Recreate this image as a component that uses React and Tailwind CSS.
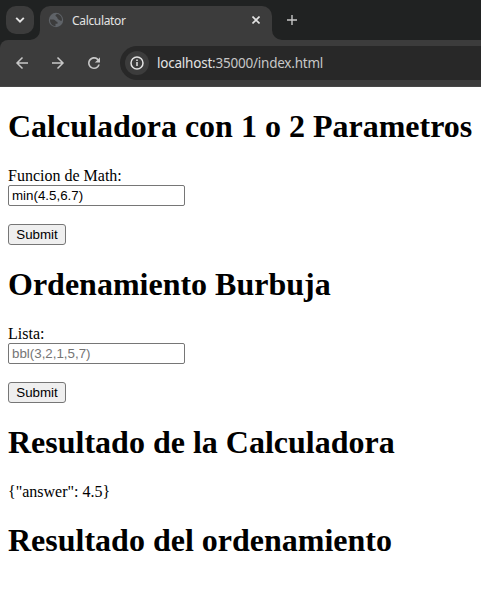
import React from 'react';

function Heading({ children }) {
  return <h1 className="mb-[23px] h-9 whitespace-nowrap text-[32px] leading-9 font-bold">{children}</h1>;
}

function Form({ label, value, placeholder }) {
  return (
    <div className="mb-[21px] flex flex-col items-start">
      <label className="h-[18px] leading-[18px]">{label}</label>
      <input
        className="h-[21px] w-[177px] rounded-[2px] border border-[#767676] bg-white px-[3px] text-[13.333px] font-['Liberation_Sans',Arial,sans-serif] placeholder:text-[#757575]"
        defaultValue={value}
        placeholder={placeholder}
      />
      <button className="mt-[18px] h-[21px] w-[58px] rounded-[3px] border border-[#767676] bg-[#efefef] text-[13.333px] leading-[18px] font-['Liberation_Sans',Arial,sans-serif]">
        Submit
      </button>
    </div>
  );
}

export default function App() {
  return (
    <div className="h-[593px] w-[481px] overflow-hidden bg-white font-['Liberation_Serif','Times_New_Roman',serif] text-base text-black">
      <header className="h-[87px] bg-[#202222] font-['Noto_Sans',sans-serif] text-[#e3e3e3]">
        <div className="flex h-10 items-start pt-[6px]">
          <button className="ml-[6px] flex h-7 w-7 items-center justify-center rounded-[10px] bg-[#3c3c3c]">
            <svg width="10" height="6" viewBox="0 0 10 6" fill="none" stroke="currentColor" strokeWidth="1.9"><path d="m1.2.8 3.8 3.8L8.8.8" /></svg>
          </button>
          <div className="relative ml-[6px] flex h-[34px] w-[232px] items-start rounded-t-[10px] bg-[#3c3c3c] pl-2">
            <svg className="absolute bottom-0 -left-[10px]" width="10" height="10" viewBox="0 0 10 10"><path d="M10 0v10H0A10 10 0 0 0 10 0" fill="#3c3c3c" /></svg>
            <svg className="absolute bottom-0 -right-[10px]" width="10" height="10" viewBox="0 0 10 10"><path d="M0 0v10h10A10 10 0 0 1 0 0" fill="#3c3c3c" /></svg>
            <svg className="mt-[6px]" width="16" height="16" viewBox="0 0 16 16"><circle cx="8" cy="8" r="7.2" fill="#5f6368" /><path d="M2 7.500h3.500c2 0 2 2.500 4 2.500v1.800H7.500v2.400C4 14 1.800 11 2 7.500M9.200 2c-2 .4-2.200 2-1 2.600 1.600.7.8 2.400 2.300 2.900 1.300.5 1.500 1.500 3.400 1.300C14.500 5.500 12.200 2.400 9.200 2" fill="#3c3c3c" /></svg>
            <span className="ml-2 mt-[7px] text-xs leading-4 tracking-[-0.33px]">Calculator</span>
            <svg className="ml-auto mr-3 mt-[10px]" width="8" height="8" viewBox="0 0 8 8" stroke="currentColor" strokeWidth="1.6"><path d="m.5.5 7 7M7.500.5l-7 7" /></svg>
          </div>
          <svg className="ml-[15px] mt-[9px]" width="10" height="10" viewBox="0 0 10 10" stroke="#c7c7c7" strokeWidth="1.4"><path d="M5 0v10M0 5h10" /></svg>
        </div>
        <div className="flex h-[47px] items-center rounded-tl-[8px] border-b border-[#474747] bg-[#3c3c3c] pl-[14px]">
          <svg width="16" height="16" viewBox="0 0 16 16" fill="none" stroke="#c7c7c7" strokeWidth="1.5"><path d="M14 8H3m5.500-5.500L3 8l5.500 5.500" /></svg>
          <svg className="ml-5" width="16" height="16" viewBox="0 0 16 16" fill="none" stroke="#c7c7c7" strokeWidth="1.5"><path d="M2 8h11M7.500 2.500 13 8l-5.500 5.500" /></svg>
          <svg className="ml-5" width="16" height="16" viewBox="0 0 16 16"><path d="M8 14a6 6 0 1 1 4.500-10L14 2.300V7.500H8.800l2.500-2.300A4.400 4.400 0 1 0 12.200 9.500h1.600A6 6 0 0 1 8 14" fill="#c7c7c7" /></svg>
          <div className="ml-[18px] flex h-[34px] flex-1 items-center rounded-l-full bg-[#282828] pl-[5px]">
            <span className="flex h-6 w-6 items-center justify-center rounded-full bg-[#3c3c3c]"><svg width="14" height="14" viewBox="0 0 14 14" fill="none" stroke="currentColor" strokeWidth="1.5"><circle cx="7" cy="7" r="6" /><path d="M7 6v4M7 3.500V5" /></svg></span>
            <span className="ml-2 text-[13.5px] tracking-[-0.22px]">localhost<span className="text-[#c7c7c7]">:35000/index.html</span></span>
          </div>
        </div>
      </header>
      <main className="px-2 pt-[21px]">
        <Heading>Calculadora con 1 o 2 Parametros</Heading>
        <Form label="Funcion de Math:" value="min(4.5,6.7)" />
        <Heading>Ordenamiento Burbuja</Heading>
        <Form label="Lista:" placeholder="bbl(3,2,1,5,7)" />
        <Heading>Resultado de la Calculadora</Heading>
        <p className="mb-[21px] h-[18px] leading-[18px]">{'{"answer": 4.5}'}</p>
        <Heading>Resultado del ordenamiento</Heading>
      </main>
    </div>
  );
}
